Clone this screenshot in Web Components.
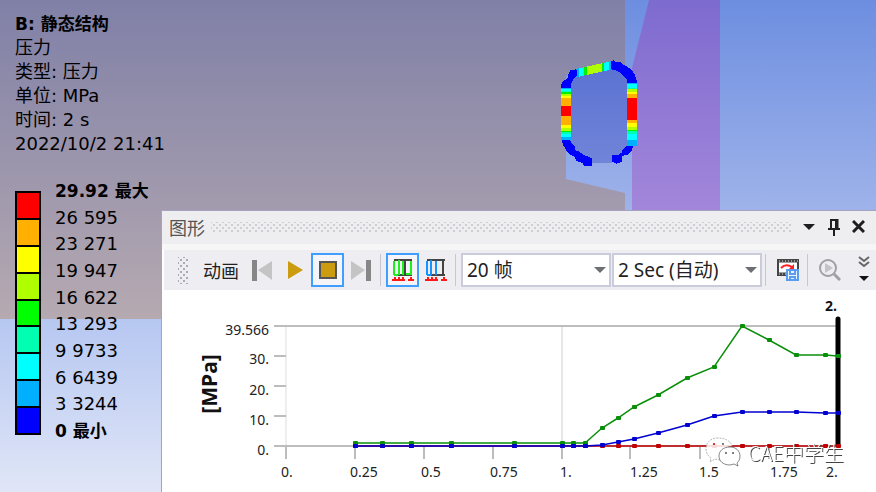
<!DOCTYPE html>
<html lang="zh-CN">
  <head>
    <meta charset="utf-8">
    <title>静态结构 - 压力</title>
    <style>
      html, body {
        height: 100%;
        margin: 0;
      }
      body {
        color: #000;
        font-family: "Noto Sans", "Noto Sans CJK SC", sans-serif;
      }
    </style>
  </head>
  <body>
    <result-window>
      <model-scene slot="scene"></model-scene>
      <result-info slot="side">
        <span slot="name">B: 静态结构</span>
        <span>压力</span>
        <span>类型: 压力</span>
        <span>单位: MPa</span>
        <span>时间: 2 s</span>
        <span>2022/10/2 21:41</span>
      </result-info>
      <result-legend slot="side"></result-legend>
      <graph-panel>
        <span slot="title">图形</span>
        <animation-bar></animation-bar>
        <time-chart></time-chart>
      </graph-panel>
    </result-window>

    <template id="result-window">
      <style>
        :host {
          display: flex;
          position: relative;
          min-height: 100%;
          overflow: hidden;
        }
        .side {
          position: relative;
          box-sizing: border-box;
          flex: 0 0 161px;
          min-width: 0;
          padding: 12px 0 0 15px;
          display: flex;
          flex-direction: column;
          gap: 23px;
          font: 18px/24px "DejaVu Sans", "Noto Sans CJK SC", sans-serif;
          white-space: nowrap;
        }
        .main {
          position: relative;
          flex: 1;
          min-width: 0;
          display: flex;
          padding-top: 210px;
        }
      </style>
      <slot name="scene"></slot>
      <div class="side"><slot name="side"></slot></div>
      <div class="main"><slot></slot></div>
    </template>

    <template id="model-scene">
      <style>
        /* the scene lies behind everything else */
        :host {
          position: absolute;
          inset: 0;
        }
        svg {
          display: block;
          width: 100%;
          height: 100%;
        }
      </style>
      <svg viewBox="0 0 876 492" preserveAspectRatio="xMinYMin slice" aria-hidden="true">
        <defs>
          <linearGradient id="wall" x1="0" y1="0" x2="0" y2="1">
            <stop offset="0" stop-color="#8080a7"/>
            <stop offset="1" stop-color="#b6aab1"/>
          </linearGradient>
          <linearGradient id="floor" x1="0" y1="0" x2="0" y2="1">
            <stop offset="0" stop-color="#b6c7f1"/>
            <stop offset="1" stop-color="#e0e6f7"/>
          </linearGradient>
          <linearGradient id="sky" gradientUnits="userSpaceOnUse" x1="0" y1="0" x2="0" y2="211">
            <stop offset="0" stop-color="#6d8ee0"/>
            <stop offset="1" stop-color="#9fb3ea"/>
          </linearGradient>
          <linearGradient id="plate" x1="0" y1="0" x2="0" y2="1">
            <stop offset="0" stop-color="#7e6bcf"/>
            <stop offset="1" stop-color="#a286da"/>
          </linearGradient>
          <linearGradient id="hole" x1="0" y1="0" x2="0" y2="1">
            <stop offset="0" stop-color="#5b72d2"/>
            <stop offset="1" stop-color="#7085d8"/>
          </linearGradient>
        </defs>
        <rect width="876" height="320" fill="url(#wall)"/>
        <rect y="319" width="876" height="173" fill="url(#floor)"/>
        <path d="M625 0H876V211H625V193L566 179V130H625Z" fill="url(#sky)"/>
        <path d="M566 82V76L572 70V82Z" fill="url(#sky)"/>
        <path d="M649 0H720V210H632V68Z" fill="url(#plate)"/>
        <!-- pressure ring, three units to a pixel -->
        <g transform="translate(540 40) scale(.333333)" shape-rendering="crispEdges">
          <path d="M78 130L110 100L213 75L245 90L276 130V310L235 350L217 368H130L90 325L78 300Z" fill="url(#hole)"/>
          <g id="bands"></g>
          <g fill="#00f">
            <path d="M64 143V132L72 120L82 118L84 104L92 90H104V86L111 90V108L104 112L98 122L92 132V143Z"/>
            <path d="M213 63L220 61L226 65H242L250 74L262 80L274 90L284 102L290 120V129H262V118L250 108L240 98L226 91L213 88Z"/>
            <path d="M64 300H90L96 312L104 320V330L116 334L132 346L144 350L155 354V378H133L128 370L108 362L104 350L88 342L78 330L70 316Z"/>
            <path d="M258 318H280L276 330L266 343L254 346L245 350V366L232 370L229 373L225 369L217 366V345H234L245 338V332Z"/>
          </g>
        </g>
      </svg>
    </template>

    <template id="result-info">
      <style>
        :host {
          display: flex;
          flex-direction: column;
        }
        ::slotted([slot=name]) {
          font-size: 17px;
          font-weight: bold;
        }
      </style>
      <slot name="name"></slot>
      <slot></slot>
    </template>

    <template id="result-legend">
      <style>
        :host {
          display: flex;
          gap: 14px;
          height: 264px;
        }
        .bar {
          box-sizing: border-box;
          width: 26px;
          margin: 12px 0 8px;
          display: flex;
          flex-direction: column;
          gap: 2px;
          padding: 2px;
          background: #000;
        }
        .bar i {
          flex: 1;
        }
        ul {
          margin: 0;
          padding: 0;
          list-style: none;
          display: flex;
          flex-direction: column;
          justify-content: space-between;
        }
        li:first-child, li:last-child {
          font-size: 17px;
          font-weight: bold;
        }
      </style>
      <div class="bar"></div>
      <ul></ul>
    </template>

    <template id="graph-panel">
      <style>
        :host {
          flex: 1;
          min-width: 0;
          display: flex;
          flex-direction: column;
          box-sizing: border-box;
          border: solid #a5a3c0;
          border-width: 1px 0 0 1px;
          background: #fff;
        }
        header {
          display: flex;
          align-items: center;
          height: 31px;
          padding: 0 8px 2px 7px;
          gap: 6px;
          background: #eeeef1;
          border-bottom: 6px solid #f6f6f7;
          color: #555;
          font-size: 18px;
        }
        .grip {
          flex: 1;
          height: 10px;
          margin-right: 2px;
          background:
            radial-gradient(circle, #cdcdd4 1px, transparent 1px) 0 0 / 6px 6px,
            radial-gradient(circle, #cdcdd4 1px, transparent 1px) 3px 3px / 6px 6px;
        }
        button {
          padding: 0;
          border: 0;
          background: none;
          width: 19px;
          height: 20px;
        }
        svg {
          display: block;
          margin: auto;
        }
      </style>
      <header>
        <slot name="title"></slot>
        <div class="grip"></div>
        <button aria-label="菜单"><svg width="12" height="6"><path d="M0 0H12L6 6Z" fill="#1e1e1e"/></svg></button>
        <button aria-label="固定"><svg width="12" height="18" fill="none" stroke="#1e1e1e" stroke-width="2"><path d="M3 11V2H8V11M0 11H12M6 11V18"/><path d="M9 1V11" stroke-width="3"/></svg></button>
        <button aria-label="关闭"><svg width="13" height="13" stroke="#1e1e1e" stroke-width="3"><path d="M1 1L12 12M12 1L1 12"/></svg></button>
      </header>
      <slot></slot>
    </template>

    <template id="tool-button">
      <style>
        :host {
          display: block;
          flex: none;
        }
        button {
          display: flex;
          align-items: center;
          justify-content: center;
          box-sizing: border-box;
          width: 33px;
          height: 34px;
          padding: 0;
          border: 2px solid transparent;
          background: none;
        }
        :host([active]) button {
          border-color: #3f9eff;
          background: #f4f4f9;
        }
      </style>
      <button><slot></slot></button>
    </template>

    <template id="tool-select">
      <style>
        :host {
          display: block;
          flex: 1;
          position: relative;
        }
        select {
          appearance: none;
          display: block;
          box-sizing: border-box;
          width: 100%;
          height: 34px;
          padding: 0 24px 0 4px;
          border: 2px solid #cbccdb;
          border-radius: 0;
          background: #fff;
          color: #222;
          font: 19px/30px "Noto Sans", "Noto Sans CJK SC", sans-serif;
        }
        svg {
          position: absolute;
          right: 5px;
          top: 14px;
          pointer-events: none;
        }
      </style>
      <select></select>
      <svg width="12" height="6"><path d="M0 0H12L6 6Z" fill="#6d6f73"/></svg>
    </template>

    <template id="animation-bar">
      <style>
        :host {
          display: flex;
          align-items: center;
          height: 40px;
          margin-left: 2px;
          background: #eeeef2;
        }
        .grip {
          width: 10px;
          height: 27px;
          margin: 0 15px 0 14px;
          background:
            radial-gradient(circle, #aaaab2 1px, transparent 1px) 0 0 / 6px 6px,
            radial-gradient(circle, #aaaab2 1px, transparent 1px) 3px 3px / 6px 6px;
        }
        .name {
          color: #222;
          font-size: 18px;
          margin-right: 6px;
          white-space: nowrap;
        }
        .line {
          width: 1px;
          height: 32px;
          margin: 0 5px 0 3px;
          background: #c6c7d3;
        }
        .selects {
          flex: 1;
          display: flex;
          gap: 1px;
        }
        .more {
          width: 18px;
          margin-left: 12px;
        }
        .more button {
          display: block;
          padding: 0;
          border: 0;
          background: none;
        }
      </style>
      <div class="grip"></div>
      <span class="name">动画</span>
      <tool-button label="开头"><svg width="20" height="22"><path d="M0 1H5V22H0Z" fill="#868686"/><path d="M20 2V21L6 11Z" fill="#c4c4c4"/></svg></tool-button>
      <tool-button label="播放"><svg width="16" height="20"><path d="M1 1V19L16 10Z" fill="#cb9b10"/></svg></tool-button>
      <tool-button label="停止" active><svg width="18" height="18"><path d="M1 1H17V17H1Z" fill="#cb9b10" stroke="#555" stroke-width="2"/></svg></tool-button>
      <tool-button label="结尾"><svg width="20" height="22"><path d="M15 1H20V22H15Z" fill="#868686"/><path d="M0 2V21L14 11Z" fill="#c4c4c4"/></svg></tool-button>
      <div class="line"></div>
      <tool-button label="分布" active><svg width="22" height="22" fill="none"><path d="M2 1H20M2 16H20M19 1V16M13 1V16" stroke="#444" stroke-width="2"/><path d="M2 2V16M7 1V16M11 2V16M19 2V16M2 16H6M14 15H19" stroke="#1df01d" stroke-width="2"/><path d="M0 21H13M16 21H22M3 18V20M7 18V20M11 18V20M19 18V20" stroke="#ff1616" stroke-width="2"/></svg></tool-button>
      <tool-button label="结果集"><svg width="22" height="22" fill="none"><path d="M2 1H20M2 16H20M18 1V16" stroke="#444" stroke-width="2"/><path d="M2 2V16M6 1V16M11 2V16M2 16H6" stroke="#1594ff" stroke-width="2"/><path d="M0 21H13M16 21H22M3 18V20M7 18V20M11 18V20M19 18V20" stroke="#ff1616" stroke-width="2"/></svg></tool-button>
      <div class="line"></div>
      <div class="selects">
        <tool-select label="帧数" value="20 帧"></tool-select>
        <tool-select label="时长" value="2 Sec (自动)"></tool-select>
      </div>
      <div class="line"></div>
      <tool-button label="导出视频"><svg width="22" height="22" fill="none"><path d="M1 1H21V16H1Z" fill="#fff" stroke="#444" stroke-width="2"/><path d="M1 2H21M1 15H10" stroke="#444" stroke-width="3"/><path d="M2 2H21M2 15H10" stroke="#eee" stroke-dasharray="1 2"/><path d="M4 9Q9 4 15 8" stroke="#ff2020" stroke-width="2"/><path d="M12 10H17V5Z" fill="#ff2020"/><path d="M10 11H21V21H10Z" fill="#eaf4ff" stroke="#5a9cf0" stroke-width="2"/><path d="M13 11V15H18V11M13 21V18H18V21" stroke="#5a9cf0" stroke-width="2"/></svg></tool-button>
      <div class="line"></div>
      <tool-button label="缩放"><svg width="22" height="22" fill="none" stroke="#a0a0a4" stroke-width="2"><circle cx="9" cy="9" r="8"/><path d="M15 15L21 21" stroke-width="3"/><path d="M6 4V14L14 9Z" fill="#c4c4c8" stroke="none"/></svg></tool-button>
      <div class="more">
        <button aria-label="更多"><svg width="12" height="26" fill="none" stroke="#666" stroke-width="2"><path d="M1 1L6 5L11 1M1 6L6 10L11 6"/><path d="M1 20H11L6 25Z" fill="#111" stroke="none"/></svg></button>
      </div>
    </template>

    <template id="time-chart">
      <style>
        :host {
          display: block;
          flex: 1;
        }
        svg {
          display: block;
          width: 100%;
        }
        text {
          font-size: 14px;
          fill: #222;
        }
        .end {
          text-anchor: end;
        }
        .axis {
          font-size: 21px;
          font-weight: bold;
          text-anchor: middle;
          fill: #111;
        }
        .now {
          font-weight: bold;
          fill: #111;
        }
        .mark {
          font-family: "Noto Sans CJK SC", sans-serif;
          font-size: 20px;
          font-weight: 300;
          fill: #fff;
          filter: drop-shadow(1px 1px 0 #444);
        }
      </style>
      <svg viewBox="162 290 714 202" role="img" aria-label="MPa">
        <path d="M286 326V446" stroke="#eee" stroke-width="2"/>
        <path d="M562 326V446" stroke="#e6e6e6" stroke-width="2"/>
        <path d="M274 326H838M274 356H286M274 386H286M274 416H286M274 446H838M286 446V459M355 446V459M424 446V459M493 446V459M562 446V459M630 446V459M700 446V459M769 446V459" stroke="#bdbdbd" stroke-width="2" fill="none"/>
        <text class="axis" transform="translate(217 384) rotate(-90)">[MPa]</text>
        <g class="end">
          <text x="269" y="335">39.566</text>
          <text x="269" y="364">30.</text>
          <text x="269" y="395">20.</text>
          <text x="269" y="425">10.</text>
          <text x="269" y="455">0.</text>
        </g>
        <text x="281" y="477">0.</text>
        <text x="350" y="477">0.25</text>
        <text x="421" y="477">0.5</text>
        <text x="490" y="477">0.75</text>
        <text x="560" y="477">1.</text>
        <text x="630" y="477">1.25</text>
        <text x="699" y="477">1.5</text>
        <text x="770" y="477">1.75</text>
        <text x="826" y="477">2.</text>
        <text class="now" x="825" y="311">2.</text>
        <path d="M838 319V445" stroke="#000" stroke-width="5" stroke-linecap="round"/>
        <g id="series"></g>
        <g fill="#fff" stroke="#999" stroke-width=".7">
          <path d="M718 438C710 438 706 443 706 449C706 453 708 456 711 458L710 462L715 459L720 460C720 452 726 446 732 446C731 441 725 438 718 438Z" fill-opacity=".85" stroke-dasharray="2 1"/>
          <path d="M730 447C723 447 719 451 719 456C719 461 723 465 730 465L734 464L738 466L737 463C739 461 740 459 740 456C740 451 736 447 730 447Z" stroke="#555"/>
        </g>
        <text class="mark" x="748" y="461">CAE中学生</text>
        <g fill="#555">
          <circle cx="714" cy="444" r="1" fill="#c00000"/>
          <circle cx="723" cy="444" r="1"/>
          <circle cx="726" cy="453" r="1"/>
          <circle cx="733" cy="453" r="1"/>
        </g>
      </svg>
    </template>

    <script>
      // attaches an open shadow root filled from the template of the same name
      class TemplateElement extends HTMLElement {
        constructor() {
          super();
          let template = document.getElementById(this.localName);
          this.attachShadow({mode: 'open'})
            .appendChild(template.content.cloneNode(true));
        }
      }

      ['result-window', 'result-info', 'graph-panel', 'animation-bar'].forEach(name => {
        customElements.define(name, class extends TemplateElement {});
      });

      customElements.define('tool-button',
        class extends TemplateElement {
          connectedCallback() {
            this.shadowRoot.querySelector('button').setAttribute('aria-label', this.getAttribute('label'));
          }
      });

      customElements.define('tool-select',
        class extends TemplateElement {
          connectedCallback() {
            const select = this.shadowRoot.querySelector('select');
            select.setAttribute('aria-label', this.getAttribute('label'));
            select.replaceChildren(new Option(this.getAttribute('value')));
          }
      });

      customElements.define('result-legend',
        class extends TemplateElement {
          connectedCallback() {
            const colors = ['#f00', '#ffb000', '#ff0', '#b0ff00', '#0f0', '#00ffb0', '#0ff', '#00b0ff', '#00f'];
            const values = ['29.92 最大', '26 595', '23 271', '19 947', '16 622', '13 293', '9 9733', '6 6439', '3 3244', '0 最小'];
            this.shadowRoot.querySelector('.bar').innerHTML =
              colors.map(c => `<i style="background: ${c}"></i>`).join('');
            this.shadowRoot.querySelector('ul').innerHTML =
              values.map(v => `<li>${v}</li>`).join('');
          }
      });

      customElements.define('model-scene',
        class extends TemplateElement {
          connectedCallback() {
            const c = {r: '#f00', o: '#ffb000', y: '#ff0', l: '#b0ff00', g: '#00f000', t: '#00ffb0', c: '#0ff', b: '#00b0ff'};
            // start of each band, its colour, and the end of the last one
            const left = [142, 'b', 146, 'c', 154, 't', 157, 'g', 162, 'l', 168, 'y', 174, 'o', 197, 'r', 228, 'o', 255, 'y', 264, 'l', 272, 'g', 276, 't', 281, 'c', 291, 'b', 300];
            const right = [129, 'b', 133, 'c', 143, 't', 147, 'l', 156, 'y', 162, 'o', 174, 'r', 241, 'o', 250, 'y', 260, 'l', 269, 'g', 273, 't', 281, 'c', 300, 'b', 318];
            const top = [108, 'b', 117, 'c', 129, 't', 132, 'g', 141, 'l', 186, 'g', 191, 'c', 206, 'b', 214];
            let out = '';
            const walk = (list, draw) => {
              for (let i = 0; i < list.length - 1; i += 2) {
                out += `<path fill="${c[list[i + 1]]}" d="${draw(list[i], list[i + 2])}"/>`;
              }
            };
            const y = x => 87 - (x - 108) * 0.22;
            walk(left, (a, b) => `M64 ${a}H92V${b}H64Z`);
            walk(right, (a, b) => `M262 ${a}H290V${b}H262Z`);
            walk(top, (a, b) => `M${a} ${y(a)}L${b} ${y(b)}V${y(b) + 25}L${a} ${y(a) + 25}Z`);
            this.shadowRoot.getElementById('bands').innerHTML = out;
          }
      });

      customElements.define('time-chart',
        class extends TemplateElement {
          connectedCallback() {
            const xs = [355, 382, 411, 451, 514, 562, 573, 585, 602, 618, 634, 658, 687, 714, 742, 769, 796, 825, 838];
            const series = [
              ['#c00000', xs.map(() => 446)],
              ['#0a8f0a', [443, 443, 443, 443, 443, 443, 443, 443, 428, 418, 407, 395, 378, 367, 326, 340, 355, 355, 356]],
              ['#0000d0', [446, 446, 446, 446, 446, 446, 446, 446, 445, 442, 439, 433, 425, 416, 412, 412, 412, 413, 413]]
            ];
            this.shadowRoot.getElementById('series').innerHTML = series.map(([color, ys]) => {
              const line = xs.map((x, i) => `${x},${ys[i]}`).join(' ');
              const dots = xs.map((x, i) => `<rect x="${x - 2}" y="${ys[i] - 2}" width="5" height="4" rx="1"/>`).join('');
              return `<g fill="${color}"><polyline points="${line}" fill="none" stroke="${color}" stroke-width="1.5"/>${dots}</g>`;
            }).join('');
          }
      });
    </script>
  </body>
</html>
